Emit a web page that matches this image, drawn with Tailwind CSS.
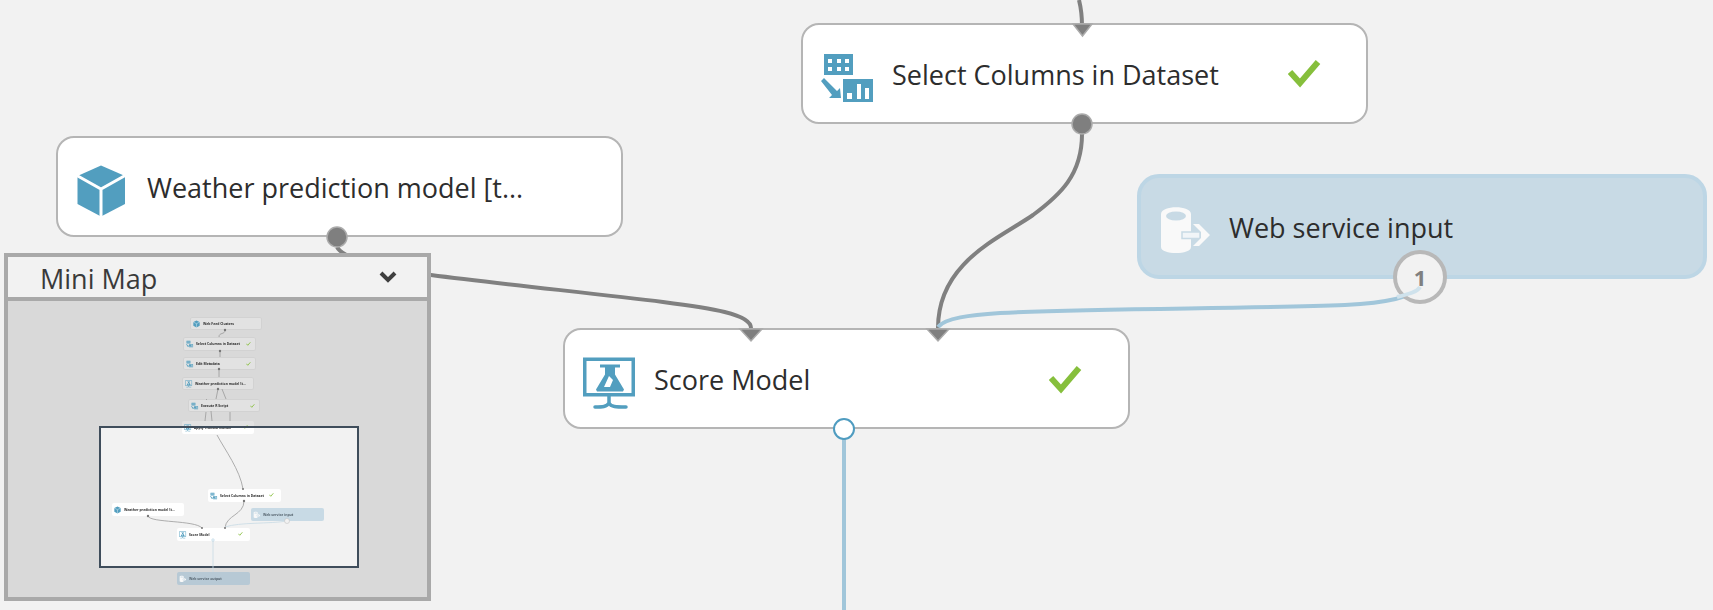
<!DOCTYPE html>
<html lang="en">
<head>
    <meta charset="UTF-8">
    <title>Experiment canvas</title>
    <script src="https://cdn.jsdelivr.net/npm/@tailwindcss/browser@4"></script>
</head>
<body class="bg-[#f2f2f2] font-['Open_Sans',sans-serif] text-[#2d2d2d] overflow-hidden">
    <!-- Shared module icons -->
    <svg class="hidden">
        <symbol id="icon-select" viewBox="0 0 60 60">
            <path fill="#529ebf" fill-rule="evenodd" d="M4 6h29v21H4zM8 11v4h4v-4zM17 11v4h4v-4zM25 11v4h4v-4zM8 19v4h4v-4zM17 19v4h4v-4zM25 19v4h4v-4z"/>
            <path fill="#529ebf" fill-rule="evenodd" d="M23 31h30v23H23zM27 45v6h5v-6zM37 36v15h4V36zM45 40v11h4V40z"/>
            <path fill="#529ebf" d="M1 33l3-3 13 13 3-3 1 10H9l3-3z"/>
        </symbol>
        <symbol id="icon-cube" viewBox="0 0 60 60">
            <path fill="#529ebf" d="M26 4.5L50 15v28L26 55.5 2.5 43V15z"/>
            <path fill="none" stroke="#fff" stroke-width="3" d="M1 14l25 14 25-14M26 28v28"/>
        </symbol>
        <symbol id="icon-score" viewBox="0 0 60 60">
            <path fill="#529ebf" fill-rule="evenodd" d="M1 4.5h52v39H1zM4.500 8v32h45V8z"/>
            <path fill="#529ebf" fill-rule="evenodd" d="M18 11.500h20v3h-5v7l9 15-1 2H15l-1-2 9-15v-7h-5zM27 23l-5 11h6l3-7z"/>
            <path fill="none" stroke="#529ebf" stroke-width="3.500" stroke-linecap="round" d="M27 43v7M13 54c7 0 12 0 14-4 2 4 7 4 17 4"/>
        </symbol>
        <symbol id="icon-input" viewBox="0 0 60 60">
            <path fill="#f9f9f9" d="M5 13c0-9 30-9 30 0v33c0 8-30 8-30 0z"/>
            <ellipse cx="20" cy="15" rx="10" ry="4.500" fill="#c8dae5"/>
            <path fill="#f1f5f8" stroke="#c8dae5" stroke-width="1.500" d="M26 31h18v6.500H26z"/>
            <path fill="#f9f9f9" d="M37 23h6l11 11-11 11h-6l8-8V31z"/>
        </symbol>
        <symbol id="icon-check" viewBox="0 0 34 28">
            <path fill="none" stroke="#86bf3c" stroke-width="6" d="M2 12l10 11L30 2"/>
        </symbol>
    </svg>

    <main class="relative w-[1713px] h-[610px]">
        <!-- Connectors behind the modules -->
        <svg class="absolute inset-0" width="1713" height="610" fill="none" stroke-width="4">
            <path stroke="#808080" d="M1079 0C1081 8 1082 14 1082 26"/>
            <path stroke="#808080" d="M1082 134C1082 175 1060 195 1033 215C1000 238 938 262 938 328"/>
            <path stroke="#808080" d="M337 247C345 262 400 271 431 275C500 284 600 294 663 302C710 308 751 314 751 328"/>
            <path stroke="#a1c6da" d="M938 327C945 318 970 315 1000 313C1100 308 1250 309 1345 305C1385 303 1412 298 1420 287"/>
            <path stroke="#a1c6da" d="M844 438V610"/>
        </svg>

        <!-- Modules -->
        <div class="absolute left-[801px] top-[23px] w-[567px] h-[101px] flex items-center bg-white border-2 border-[#b5b5b5] rounded-[18px]">
            <svg class="ml-[17px] mt-[8px] w-[60px] h-[60px] shrink-0"><use href="#icon-select"/></svg>
            <span class="ml-[12px] mt-[4px] text-[27px]">Select Columns in Dataset</span>
            <svg class="absolute left-[485px] top-[35px] w-[34px] h-[28px]"><use href="#icon-check"/></svg>
        </div>
        <div class="absolute left-[56px] top-[136px] w-[567px] h-[101px] flex items-center bg-white border-2 border-[#b5b5b5] rounded-[18px]">
            <svg class="ml-[17px] mt-[8px] w-[60px] h-[60px] shrink-0"><use href="#icon-cube"/></svg>
            <span class="ml-[12px] mt-[4px] text-[27px]">Weather prediction model [t...</span>
        </div>
        <div class="absolute left-[563px] top-[328px] w-[567px] h-[101px] flex items-center bg-white border-2 border-[#b5b5b5] rounded-[18px]">
            <svg class="ml-[17px] mt-[8px] w-[60px] h-[60px] shrink-0"><use href="#icon-score"/></svg>
            <span class="ml-[12px] mt-[4px] text-[27px]">Score Model</span>
            <svg class="absolute left-[484px] top-[36px] w-[34px] h-[28px]"><use href="#icon-check"/></svg>
        </div>
        <div class="absolute left-[1137px] top-[174px] w-[570px] h-[105px] flex items-center bg-[#c8dae5] border-4 border-[#bdd6e5] rounded-[22px]">
            <svg class="ml-[15px] mt-[8px] w-[60px] h-[60px] shrink-0"><use href="#icon-input"/></svg>
            <span class="ml-[13px] mt-[4px] text-[27px]">Web service input</span>
        </div>

        <!-- Ports on top of the modules -->
        <svg class="absolute inset-0 pointer-events-none" width="1713" height="610">
            <g fill="#7f7f7f" stroke="#ababab" stroke-width="1.500">
                <path d="M1073 24h19l-9.500 12z"/>
                <path d="M740 329h22l-11 12z"/>
                <path d="M927 329h22l-11 12z"/>
                <circle cx="1082" cy="124" r="10"/>
                <circle cx="337" cy="237" r="10"/>
            </g>
            <circle cx="844" cy="429" r="10" fill="#fff" stroke="#4f9cc0" stroke-width="2"/>
        </svg>
        <div class="absolute left-[1393px] top-[250px] w-[54px] h-[54px] flex items-center justify-center rounded-full bg-[#f2f2f2] border-4 border-[#b8b8b8] text-[22px] font-bold text-[#808080]">1</div>
        <svg class="absolute left-[1393px] top-[250px] pointer-events-none" width="54" height="54" fill="none">
            <path stroke="#cfe2ec" stroke-width="4" d="M4 47C16 44 24 42 27 37"/>
        </svg>

        <!-- Mini map -->
        <section class="absolute left-[4px] top-[253px] w-[427px] h-[348px] flex flex-col border-4 border-[#a9a9a9] bg-[#d9d9d9]">
            <header class="h-[44px] shrink-0 flex items-center justify-between pl-[32px] pr-[30px] bg-[#f2f2f2] border-b-4 border-[#a9a9a9]">
                <span class="mt-[4px] text-[27px] text-[#3a3a3a]">Mini Map</span>
                <svg width="18" height="14" fill="none"><path stroke="#3f3f3f" stroke-width="4" d="M2 3l7 7 7-7"/></svg>
            </header>
            <div class="relative flex-1 blur-[0.35px]">
                <!-- visible window -->
                <div class="absolute left-[91px] top-[125px] w-[260px] h-[142px] bg-[#f2f2f2]"></div>

                <!-- dimmed modules -->
                <div class="absolute left-[182px] top-[16px] w-[72px] h-[13px] flex items-center bg-[#e2e2e2] border border-[#d2d2d2] rounded-[2px]">
                    <svg class="ml-[2px] w-[8px] h-[8px]"><use href="#icon-cube"/></svg>
                    <span class="ml-[2px] text-[3.400px] font-bold whitespace-nowrap">Web Feed Clusters</span>
                </div>
                <div class="absolute left-[175px] top-[36px] w-[73px] h-[14px] flex items-center bg-[#e2e2e2] border border-[#d2d2d2] rounded-[2px]">
                    <svg class="ml-[2px] w-[8px] h-[8px]"><use href="#icon-select"/></svg>
                    <span class="ml-[2px] text-[3.400px] font-bold whitespace-nowrap">Select Columns in Dataset</span>
                    <svg class="absolute left-[62px] top-[4px] w-[5px] h-[4px]"><use href="#icon-check"/></svg>
                </div>
                <div class="absolute left-[175px] top-[56px] w-[73px] h-[13px] flex items-center bg-[#e2e2e2] border border-[#d2d2d2] rounded-[2px]">
                    <svg class="ml-[2px] w-[8px] h-[8px]"><use href="#icon-select"/></svg>
                    <span class="ml-[2px] text-[3.400px] font-bold whitespace-nowrap">Edit Metadata</span>
                    <svg class="absolute left-[62px] top-[4px] w-[5px] h-[4px]"><use href="#icon-check"/></svg>
                </div>
                <div class="absolute left-[174px] top-[76px] w-[72px] h-[13px] flex items-center bg-[#e2e2e2] border border-[#d2d2d2] rounded-[2px]">
                    <svg class="ml-[2px] w-[8px] h-[8px]"><use href="#icon-score"/></svg>
                    <span class="ml-[2px] text-[3.400px] font-bold whitespace-nowrap">Weather prediction model [t...</span>
                </div>
                <div class="absolute left-[180px] top-[98px] w-[72px] h-[13px] flex items-center bg-[#e2e2e2] border border-[#d2d2d2] rounded-[2px]">
                    <svg class="ml-[2px] w-[8px] h-[8px]"><use href="#icon-select"/></svg>
                    <span class="ml-[2px] text-[3.400px] font-bold whitespace-nowrap">Execute R Script</span>
                    <svg class="absolute left-[61px] top-[4px] w-[5px] h-[4px]"><use href="#icon-check"/></svg>
                </div>
                <div class="absolute left-[174px] top-[120px] w-[72px] h-[13px] flex items-center bg-[linear-gradient(#e2e2e2_40%,#ffffff_40%)] rounded-[2px]">
                    <svg class="ml-[2px] w-[8px] h-[8px]"><use href="#icon-score"/></svg>
                    <span class="ml-[2px] text-[3.400px] font-bold whitespace-nowrap">Apply Transformation</span>
                    <svg class="absolute left-[61px] top-[4px] w-[5px] h-[4px]"><use href="#icon-check"/></svg>
                </div>
                <div class="absolute left-[200px] top-[188px] w-[73px] h-[13px] flex items-center bg-white rounded-[2px]">
                    <svg class="ml-[2px] w-[8px] h-[8px]"><use href="#icon-select"/></svg>
                    <span class="ml-[2px] text-[3.400px] font-bold whitespace-nowrap">Select Columns in Dataset</span>
                    <svg class="absolute left-[61px] top-[4px] w-[5px] h-[4px]"><use href="#icon-check"/></svg>
                </div>
                <div class="absolute left-[104px] top-[202px] w-[72px] h-[13px] flex items-center bg-white rounded-[2px]">
                    <svg class="ml-[2px] w-[8px] h-[8px]"><use href="#icon-cube"/></svg>
                    <span class="ml-[2px] text-[3.400px] font-bold whitespace-nowrap">Weather prediction model [t...</span>
                </div>
                <div class="absolute left-[243px] top-[207px] w-[73px] h-[13px] flex items-center bg-[#c8dae5] rounded-[2px]">
                    <svg class="ml-[2px] w-[8px] h-[8px]"><use href="#icon-input"/></svg>
                    <span class="ml-[2px] text-[3.400px] text-[#55636e] font-bold whitespace-nowrap">Web service input</span>
                </div>
                <div class="absolute left-[169px] top-[227px] w-[73px] h-[13px] flex items-center bg-white rounded-[2px]">
                    <svg class="ml-[2px] w-[8px] h-[8px]"><use href="#icon-score"/></svg>
                    <span class="ml-[2px] text-[3.400px] font-bold whitespace-nowrap">Score Model</span>
                    <svg class="absolute left-[61px] top-[4px] w-[5px] h-[4px]"><use href="#icon-check"/></svg>
                </div>
                <div class="absolute left-[169px] top-[271px] w-[73px] h-[13px] flex items-center bg-[#b7c9d5] rounded-[2px]">
                    <svg class="ml-[2px] w-[8px] h-[8px]"><use href="#icon-input"/></svg>
                    <span class="ml-[2px] text-[3.400px] text-[#55636e] font-bold whitespace-nowrap">Web service output</span>
                </div>

                <!-- window frame sits over the modules -->
                <div class="absolute left-[91px] top-[125px] w-[260px] h-[142px] border-2 border-[#3f4d5b]"></div>

                <!-- mini connectors, page coordinates -->
                <svg class="absolute inset-0 w-full h-full pointer-events-none" viewBox="8 301 419 296" fill="none" stroke-width="0.800">
                    <g stroke="#9a9a9a">
                        <path d="M225 330C225 335 219 332 219 337"/>
                        <path d="M220 351V357"/>
                        <path d="M219 369V377"/>
                        <path d="M218 389L216 399M222 389L226 399M207 399L206 400"/>
                        <path d="M206 412L205 421M211 411L212 421M230 412V421"/>
                        <path d="M217 435C225 450 240 470 243 489"/>
                        <path d="M244 501C244 515 226 515 225 528"/>
                        <path d="M148 516C150 523 195 520 202 528"/>
                    </g>
                    <path stroke="#c8dae5" d="M287 521C270 524 240 522 225 527"/>
                    <path stroke="#c8dae5" d="M213 540V572"/>
                    <g fill="#777" stroke="none">
                        <circle cx="225" cy="330" r="1.200"/><circle cx="220" cy="351" r="1.200"/>
                        <circle cx="219" cy="369" r="1.200"/><circle cx="218" cy="389" r="1.200"/>
                        <circle cx="244" cy="501" r="1.200"/><circle cx="148" cy="516" r="1.200"/>
                        <circle cx="243" cy="489" r="1"/><circle cx="225" cy="528" r="1"/><circle cx="202" cy="528" r="1"/>
                    </g>
                    <circle cx="213" cy="540" r="1.200" fill="#fff" stroke="#9cc4da" stroke-width="0.500"/>
                    <circle cx="287" cy="521" r="2.500" fill="#f2f2f2" stroke="#bbb" stroke-width="0.500"/>
                </svg>
            </div>
        </section>
    </main>
</body>
</html>
